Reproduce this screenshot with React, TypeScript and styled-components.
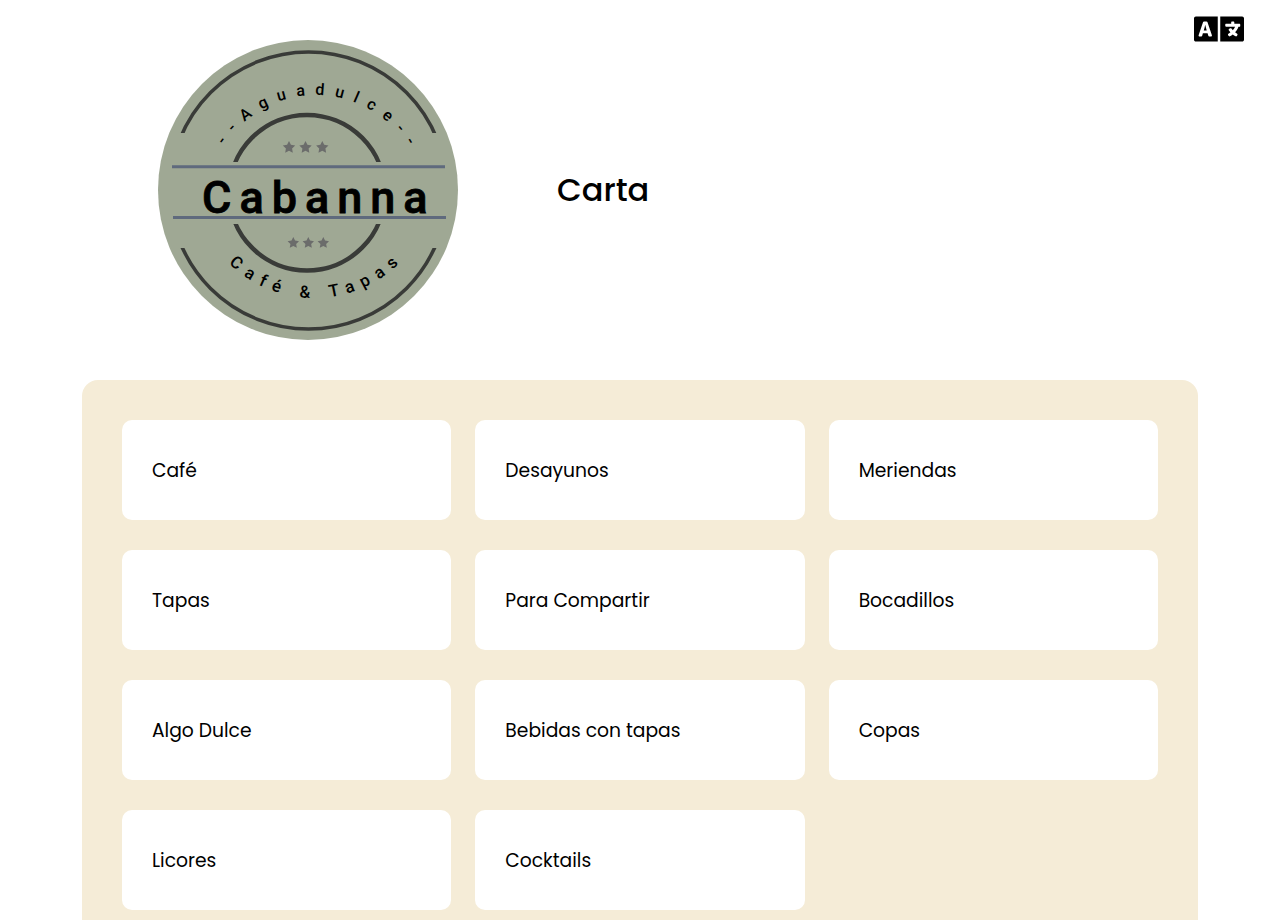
import React from "react";
import styled, { createGlobalStyle } from "styled-components";
import { FaLanguage } from "react-icons/fa";

const GlobalStyle = createGlobalStyle`
  *, *::before, *::after { box-sizing: border-box; }
  body {
    margin: 0;
    background: #ffffff;
    color: #000000;
    font-family: Poppins, Inter, sans-serif;
  }
`;

const Header = styled.header`
  display: flex;
  align-items: center;
  padding: 0 36px 0 158px;
`;

const Logo = styled.svg`
  display: block;
  flex: none;
  width: 300px;
  height: 300px;
  margin: 40px 0;
  font-family: Roboto, sans-serif;
  font-weight: 500;
`;

const Title = styled.h1`
  flex: 1;
  margin: 0 0 0 99px;
  font-size: 32px;
  font-weight: 500;
  line-height: 48px;
`;

const LanguageButton = styled.button`
  align-self: flex-start;
  display: flex;
  margin-top: 4px;
  padding: 0;
  border: 0;
  background: none;
  color: #000000;
  font-size: 50px;
  cursor: pointer;
`;

const Menu = styled.nav`
  margin: 0 82px;
  padding: 40px;
  border-radius: 16px;
  background: #f5ecd7;
`;

const CardGrid = styled.ul`
  display: grid;
  grid-template-columns: repeat(3, 1fr);
  gap: 30px 24px;
  margin: 0;
  padding: 0;
  list-style: none;
`;

const Card = styled.a`
  display: flex;
  align-items: center;
  height: 100px;
  padding: 0 30px;
  border-radius: 10px;
  background: #ffffff;
  color: inherit;
  text-decoration: none;
`;

const CardTitle = styled.h3`
  margin: 0;
  font-weight: 400;
`;

const sections = [
  "Café",
  "Desayunos",
  "Meriendas",
  "Tapas",
  "Para Compartir",
  "Bocadillos",
  "Algo Dulce",
  "Bebidas con tapas",
  "Copas",
  "Licores",
  "Cocktails",
];

function starPoints(cx: number, cy: number, r: number) {
  return Array.from({ length: 10 }, (_, i) => {
    const radius = i % 2 ? r * 0.5 : r;
    const angle = (Math.PI * i) / 5 - Math.PI / 2;
    return `${(cx + radius * Math.cos(angle)).toFixed(2)},${(cy + radius * Math.sin(angle)).toFixed(2)}`;
  }).join(" ");
}

function CabannaLogo() {
  return (
    <Logo viewBox="0 0 300 300" role="img" aria-label="Cabanna, Café & Tapas, Aguadulce">
      <defs>
        <clipPath id="outerBands">
          <rect width="300" height="93" />
          <rect y="208" width="300" height="92" />
        </clipPath>
        <clipPath id="innerBands">
          <rect width="300" height="122" />
          <rect y="184" width="300" height="116" />
        </clipPath>
        <path id="upperText" d="M50 163a108 108 0 0 1 216 0" />
        <path id="lowerText" d="M34 136a122 122 0 0 0 244 0" />
      </defs>
      <circle cx="150" cy="150" r="150" fill="#9fa894" />
      <g fill="none" stroke="#393b38">
        <circle cx="150.500" cy="150.500" r="138.500" strokeWidth="3.500" clipPath="url(#outerBands)" />
        <circle cx="149" cy="152.700" r="77.800" strokeWidth="4.500" clipPath="url(#innerBands)" />
      </g>
      <path d="M14 126.700H287M15 177.500H288" stroke="#5f6a7d" strokeWidth="3" />
      <g fill="#6b6c6b">
        {[131, 147.500, 164.300].map((x) => (
          <polygon key={x} points={starPoints(x, 107.500, 6.500)} />
        ))}
        {[135.300, 150.300, 165.300].map((x) => (
          <polygon key={x} points={starPoints(x, 203, 6)} />
        ))}
      </g>
      <text x="44" y="173" fontSize="45" letterSpacing="8" stroke="#000000" strokeWidth="0.800">Cabanna</text>
      <text fontSize="16" letterSpacing="10" textAnchor="middle">
        <textPath href="#upperText" startOffset="51.500%">--Aguadulce--</textPath>
      </text>
      <text fontSize="17" letterSpacing="8" textAnchor="middle">
        <textPath href="#lowerText" startOffset="51%">Café &amp; Tapas</textPath>
      </text>
    </Logo>
  );
}

export default function App() {
  return (
    <>
      <GlobalStyle />
      <Header>
        <CabannaLogo />
        <Title>Carta</Title>
        <LanguageButton type="button" aria-label="Cambiar idioma">
          <FaLanguage />
        </LanguageButton>
      </Header>
      <Menu aria-label="Carta">
        <CardGrid>
          {sections.map((name) => (
            <li key={name}>
              <Card href="#">
                <CardTitle>{name}</CardTitle>
              </Card>
            </li>
          ))}
        </CardGrid>
      </Menu>
    </>
  );
}
